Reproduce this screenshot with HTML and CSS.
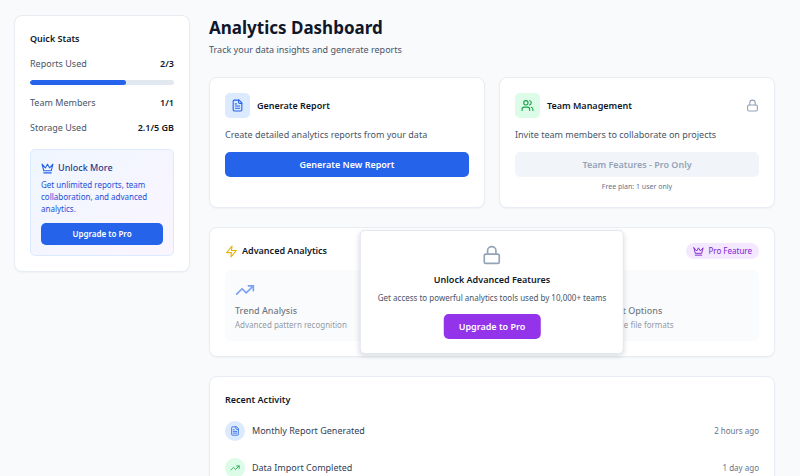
FILE: index.html
```html
<!DOCTYPE html>
<html lang="en">
<head>
<meta charset="utf-8">
<meta name="viewport" content="width=device-width, initial-scale=1">
<title>Analytics Dashboard</title>
<link rel="stylesheet" href="styles.css">
</head>
<body>
<svg class="sprite" aria-hidden="true">
  <symbol id="crown" viewBox="0 0 24 24"><path d="m2 4 3 12h14l3-12-6 7-4-7-4 7-6-7z"/><path d="M5 20h14"/></symbol>
  <symbol id="file" viewBox="0 0 24 24"><path d="M15 2H6a2 2 0 0 0-2 2v16a2 2 0 0 0 2 2h12a2 2 0 0 0 2-2V7Z"/><path d="M14 2v4a2 2 0 0 0 2 2h4"/><path d="M10 9H8"/><path d="M16 13H8"/><path d="M16 17H8"/></symbol>
  <symbol id="users" viewBox="0 0 24 24"><path d="M16 21v-2a4 4 0 0 0-4-4H6a4 4 0 0 0-4 4v2"/><circle cx="9" cy="7" r="4"/><path d="M22 21v-2a4 4 0 0 0-3-3.870"/><path d="M16 3.130a4 4 0 0 1 0 7.750"/></symbol>
  <symbol id="lock" viewBox="0 0 24 24"><rect x="3" y="11" width="18" height="11" rx="2"/><path d="M7 11V7a5 5 0 0 1 10 0v4"/></symbol>
  <symbol id="zap" viewBox="0 0 24 24"><path d="M13 2 3 14h9l-1 8 10-12h-9z"/></symbol>
  <symbol id="trend" viewBox="0 0 24 24"><path d="m22 7-8.500 8.500-5-5L2 17"/><path d="M16 7h6v6"/></symbol>
</svg>
<div class="page">
  <aside class="card sidebar">
    <h2>Quick Stats</h2>
    <div class="stat"><span>Reports Used</span><strong>2/3</strong></div>
    <div class="meter"><div class="meter-fill" style="width: 66.67%"></div></div>
    <div class="stat"><span>Team Members</span><strong>1/1</strong></div>
    <div class="stat"><span>Storage Used</span><strong>2.1/5 GB</strong></div>
    <section class="upsell">
      <h3><svg class="icon icon-crown"><use href="#crown"/></svg>Unlock More</h3>
      <p>Get unlimited reports, team collaboration, and advanced analytics.</p>
      <button type="button" class="btn btn-small">Upgrade to Pro</button>
    </section>
  </aside>
  <main>
    <header>
      <h1>Analytics Dashboard</h1>
      <p>Track your data insights and generate reports</p>
    </header>
    <div class="actions">
      <section class="card">
        <div class="card-head">
          <span class="tile blue"><svg class="icon"><use href="#file"/></svg></span>
          <h2>Generate Report</h2>
        </div>
        <p class="desc">Create detailed analytics reports from your data</p>
        <button type="button" class="btn">Generate New Report</button>
      </section>
      <section class="card">
        <div class="card-head">
          <span class="tile green"><svg class="icon"><use href="#users"/></svg></span>
          <h2>Team Management</h2>
          <svg class="icon icon-locked"><use href="#lock"/></svg>
        </div>
        <p class="desc">Invite team members to collaborate on projects</p>
        <button type="button" class="btn" disabled>Team Features - Pro Only</button>
        <p class="plan">Free plan: 1 user only</p>
      </section>
    </div>
    <section class="card advanced">
      <div class="advanced-head">
        <svg class="icon icon-zap"><use href="#zap"/></svg>
        <h2>Advanced Analytics</h2>
        <span class="badge"><svg class="icon"><use href="#crown"/></svg>Pro Feature</span>
      </div>
      <div class="features">
        <div class="feature">
          <svg class="icon"><use href="#trend"/></svg>
          <h3>Trend Analysis</h3>
          <p>Advanced pattern recognition</p>
        </div>
        <div class="feature"></div>
        <div class="feature">
          <svg class="icon"><use href="#file"/></svg>
          <h3>Export Options</h3>
          <p>Multiple file formats</p>
        </div>
      </div>
      <div class="overlay">
        <svg class="icon"><use href="#lock"/></svg>
        <h3>Unlock Advanced Features</h3>
        <p>Get access to powerful analytics tools used by 10,000+ teams</p>
        <button type="button" class="btn btn-purple">Upgrade to Pro</button>
      </div>
    </section>
    <section class="card recent">
      <h2>Recent Activity</h2>
      <ul>
        <li><span class="dot blue"><svg class="icon"><use href="#file"/></svg></span>Monthly Report Generated<time>2 hours ago</time></li>
        <li><span class="dot green"><svg class="icon"><use href="#trend"/></svg></span>Data Import Completed<time>1 day ago</time></li>
      </ul>
    </section>
  </main>
</div>
</body>
</html>
```
FILE: styles.css
```css
* { box-sizing: border-box; }
body {
  margin: 0;
  background: #f8fafc;
  color: #0f172a;
  font: 9px/16px "Noto Sans", "Open Sans", sans-serif;
}
h1, h2, h3, p, ul { margin: 0; padding: 0; }
h2 { font-size: 9px; line-height: 16px; font-weight: 600; }
.sprite { display: none; }
.icon {
  width: 13px;
  height: 13px;
  flex: none;
  fill: none;
  stroke: currentColor;
  stroke-width: 2;
  stroke-linecap: round;
  stroke-linejoin: round;
}
.page {
  display: grid;
  grid-template-columns: 176px minmax(0, 1fr);
  align-items: start;
  gap: 19px;
  padding: 15px 25px 15px 14px;
}
.card {
  padding: 15px;
  background: #fff;
  border: 1px solid #e8edf3;
  border-radius: 8px;
  box-shadow: 0 1px 2px rgb(15 23 42 / 4%);
}
.btn {
  display: block;
  width: 100%;
  height: 25px;
  padding: 0 15px;
  border: 0;
  border-radius: 5px;
  background: #2563eb;
  color: #fff;
  font: inherit;
  font-weight: 600;
}
.btn:disabled { background: #f1f5f9; color: #94a3b8; }
.btn-small { height: 22px; font-size: 8px; }
.btn-purple { width: auto; background: #9333ea; }

.stat {
  display: flex;
  justify-content: space-between;
  margin-top: 9px;
  color: #475569;
}
.stat strong { color: #0f172a; font-weight: 600; }
.meter {
  height: 5px;
  margin: 8px 0 10px;
  border-radius: 3px;
  background: #e2e8f0;
  overflow: hidden;
}
.meter-fill { height: 100%; border-radius: 3px; background: #2563eb; }
.upsell {
  margin-top: 13px;
  padding: 10px;
  border: 1px solid #dbeafe;
  border-radius: 5px;
  background: linear-gradient(135deg, #eff6ff, #faf5ff);
}
.upsell h3 {
  display: flex;
  align-items: center;
  gap: 4px;
  font-size: 9px;
  font-weight: 500;
  color: #1e3a8a;
}
.icon-crown { color: #2563eb; }
.upsell p {
  margin: 3px 0 8px;
  font-size: 8px;
  line-height: 12px;
  color: #1d4ed8;
}

h1 { font-size: 17px; line-height: 25px; font-weight: 700; }
header p { margin-top: 2px; color: #475569; }
.actions {
  display: grid;
  grid-template-columns: 1fr 1fr;
  gap: 14px;
  margin: 19px 0;
}
.card-head { display: flex; align-items: center; gap: 7px; }
.tile {
  display: grid;
  place-items: center;
  width: 25px;
  height: 25px;
  border-radius: 5px;
}
.blue { background: #dbeafe; color: #2563eb; }
.green { background: #dcfce7; color: #16a34a; }
.icon-locked { margin-left: auto; color: #94a3b8; }
.desc { margin: 9px 0; color: #475569; }
.plan {
  margin-top: 5px;
  font-size: 7px;
  line-height: 10px;
  text-align: center;
  color: #64748b;
}
.actions .card { min-height: 130px; }

.advanced { position: relative; }
.advanced-head { display: flex; align-items: center; gap: 4px; }
.icon-zap { color: #eab308; }
.badge {
  display: flex;
  align-items: center;
  gap: 4px;
  margin-left: auto;
  padding: 0 7px;
  border-radius: 9px;
  background: #f3e8ff;
  color: #7e22ce;
  font-size: 8px;
}
.badge .icon { width: 11px; height: 11px; }
.features {
  display: grid;
  grid-template-columns: repeat(3, 1fr);
  gap: 10px;
  margin-top: 11px;
  opacity: 0.6;
}
.feature { padding: 10px; border-radius: 5px; background: #f8fafc; }
.feature .icon { display: block; width: 20px; height: 20px; color: #2563eb; }
.feature h3 { margin-top: 4px; font-size: 9px; line-height: 14px; font-weight: 500; }
.feature p { font-size: 8px; line-height: 13px; color: #475569; }
.overlay {
  position: absolute;
  top: 50%;
  left: 50%;
  transform: translate(-50%, -50%);
  display: flex;
  flex-direction: column;
  align-items: center;
  padding: 14px 17px;
  border: 1px solid #e2e8f0;
  border-radius: 5px;
  background: #fff;
  box-shadow: 0 2px 5px rgb(15 23 42 / 15%);
  white-space: nowrap;
}
.overlay .icon { width: 20px; height: 20px; color: #94a3b8; }
.overlay h3 { margin-top: 7px; font-size: 9px; font-weight: 600; }
.overlay p { margin: 2px 0 9px; font-size: 8px; line-height: 15px; color: #475569; }

.recent { margin-top: 19px; }
.recent ul { list-style: none; margin-top: 4px; }
.recent li { display: flex; align-items: center; gap: 7px; height: 37px; color: #334155; }
.dot { display: grid; place-items: center; width: 20px; height: 20px; border-radius: 50%; }
.dot .icon { width: 10px; height: 10px; }
.recent time { margin-left: auto; font-size: 8px; color: #64748b; }
```
